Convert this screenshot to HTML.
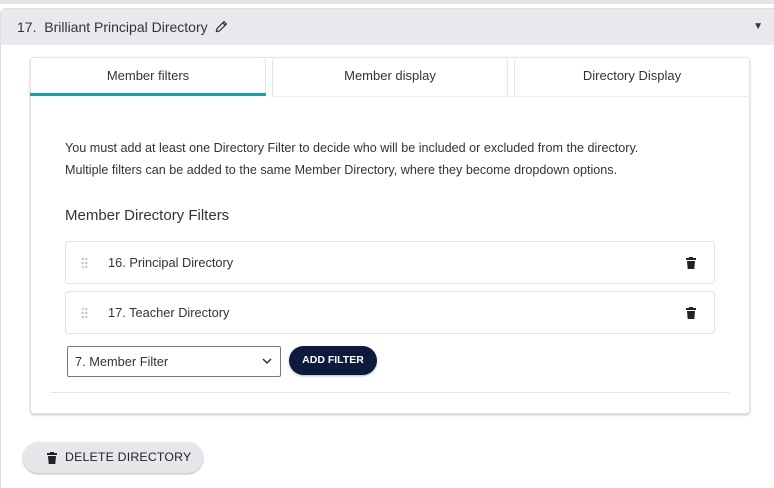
<!DOCTYPE html>
<html style="overflow:hidden;width:774px;height:488px"><head><style>
*{box-sizing:border-box;margin:0;padding:0}
body{width:774px;height:488px;background:#fff;font-family:"Liberation Sans",sans-serif;color:#333;position:relative;overflow:hidden}
.top{position:absolute;left:0;top:0;width:774px;height:4px;background:#e4e4e6}
.outer{position:absolute;left:0;top:8px;width:790px;height:500px;border:1px solid #ddd;border-radius:6px}
.hdr{position:absolute;left:1px;top:9px;width:773px;height:36px;background:#e8e9ec;font-size:14px;line-height:36px;padding-left:16px;color:#333}
.caret{position:absolute;right:11px;top:0;font-size:10px}
.card{position:absolute;left:30px;top:57px;width:720px;height:357px;border:1px solid #e2e2e2;border-radius:4px;box-shadow:0 1px 2px rgba(0,0,0,.25)}
.tab{position:absolute;top:57px;height:39px;border:1px solid #e6e6e6;border-bottom:none;border-radius:4px 4px 0 0;font-size:13px;text-align:center;line-height:35px;color:#333;background:#fff}
.ul{position:absolute;left:30px;top:93px;width:236px;height:3px;background:#1a9fa6}
.tline{position:absolute;left:272px;top:96px;width:478px;height:1px;background:#eee}
.p{position:absolute;left:65px;font-size:12.6px;color:#333}
h3{position:absolute;left:65px;top:207px;font-size:15px;font-weight:normal;color:#333}
.item{position:absolute;left:65px;width:650px;height:43px;border:1px solid #e2e2e2;border-radius:4px;font-size:12.8px;line-height:42px;padding-left:42px}
.dots{position:absolute;left:15px;top:15px;width:7px;height:12px;background:radial-gradient(circle,#ccc 1.2px,transparent 1.4px) 0 0/3.5px 4px}
.trash{position:absolute;right:18px;top:15px}
.sel{position:absolute;left:67px;top:346px;width:214px;height:31px;border:1px solid #777;border-radius:2px;font-size:12.8px;line-height:30px;padding-left:7px}
.btn{position:absolute;left:289px;top:346px;width:88px;height:29px;background:#0b1a3d;border-radius:15px;color:#fff;font-size:10.5px;font-weight:bold;text-align:center;line-height:28px;box-shadow:0 1px 2px rgba(0,0,0,.3)}
.hr{position:absolute;left:50px;top:392px;width:680px;height:1px;background:#e6e6e6}
.del{position:absolute;left:23px;top:442px;width:180px;height:31px;background:#e6e7ea;border-radius:16px;box-shadow:0 1px 2px rgba(0,0,0,.3);font-size:12.3px;line-height:31px;padding-left:42px;color:#222;letter-spacing:.2px}
</style></head><body>
<div class="top"></div>
<div class="outer"></div>
<div class="hdr">17.&nbsp;&nbsp;Brilliant Principal Directory&nbsp;
<svg width="13" height="13" viewBox="0 0 16 16" style="vertical-align:-1px"><path d="M11 2l3 3-8.5 8.5-3.8.8.8-3.8z M9.5 3.5l3 3" fill="none" stroke="#333" stroke-width="1.5"/></svg>
<span class="caret">▼</span></div>
<div class="card"></div>
<div class="tab" style="left:30px;width:236px">Member filters</div>
<div class="tab" style="left:272px;width:236px">Member display</div>
<div class="tab" style="left:514px;width:236px">Directory Display</div>
<div class="ul"></div><div class="tline"></div>
<div class="p" style="top:141px">You must add at least one Directory Filter to decide who will be included or excluded from the directory.</div>
<div class="p" style="top:163px">Multiple filters can be added to the same Member Directory, where they become dropdown options.</div>
<h3>Member Directory Filters</h3>
<div class="item" style="top:241px"><span class="dots"></span>16. Principal Directory<svg class="trash" width="10" height="12" viewBox="0 0 10 12"><rect x="0" y="1" width="10" height="2" fill="#222"/><rect x="3" y="0" width="4" height="2" fill="#222"/><path d="M1 4h8l-.7 8H1.7z" fill="#222"/></svg></div>
<div class="item" style="top:291px"><span class="dots"></span>17. Teacher Directory<svg class="trash" width="10" height="12" viewBox="0 0 10 12"><rect x="0" y="1" width="10" height="2" fill="#222"/><rect x="3" y="0" width="4" height="2" fill="#222"/><path d="M1 4h8l-.7 8H1.7z" fill="#222"/></svg></div>
<div class="sel">7. Member Filter<svg style="position:absolute;right:8px;top:11px" width="10" height="7" viewBox="0 0 10 7"><path d="M1 1l4 4 4-4" fill="none" stroke="#333" stroke-width="1.5"/></svg></div>
<div class="btn">ADD FILTER</div>
<div class="hr"></div>
<div class="del"><svg style="position:absolute;left:24px;top:10px" width="10" height="12" viewBox="0 0 10 12"><rect x="0" y="1" width="10" height="2" fill="#222"/><rect x="3" y="0" width="4" height="2" fill="#222"/><path d="M1 4h8l-.7 8H1.7z" fill="#222"/></svg>DELETE DIRECTORY</div>
</body></html>
